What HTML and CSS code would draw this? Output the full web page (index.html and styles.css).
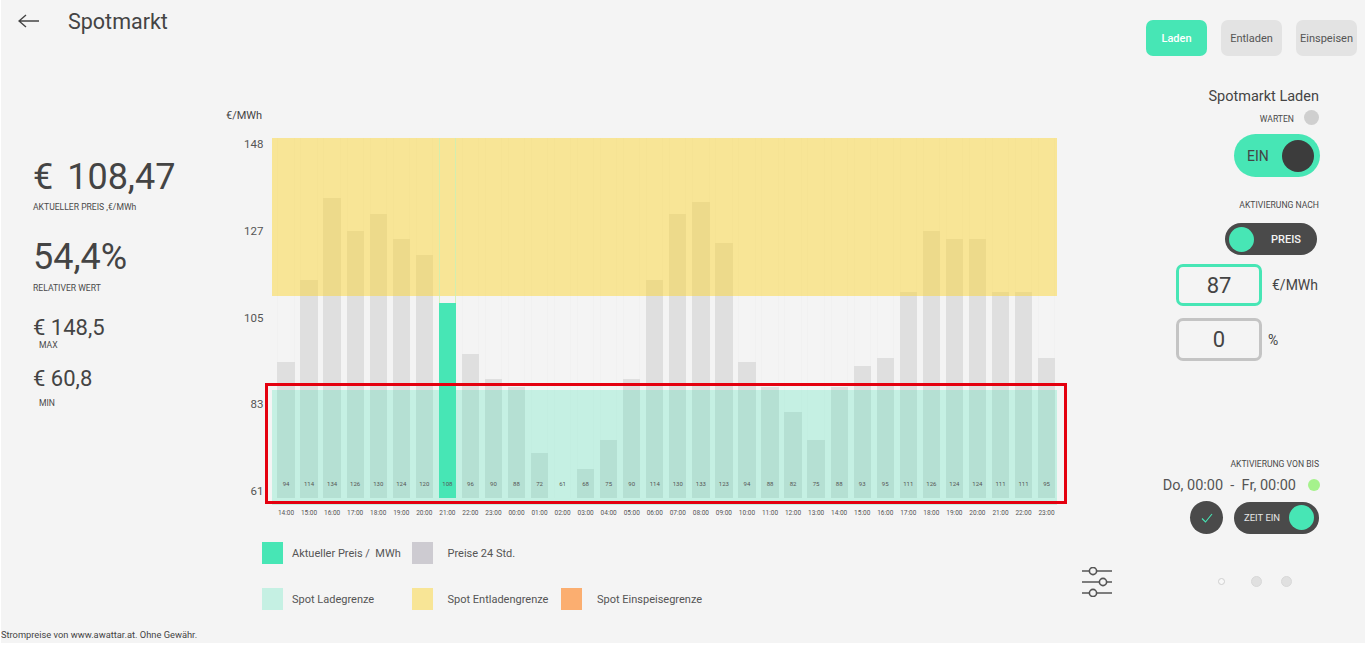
FILE: index.html
```html
<!DOCTYPE html>
<html>
<head>
    <title>Spotmarkt</title>
    <link rel="stylesheet" href="styles.css">
</head>
<body>
<div class="app">
    <header class="top">
        <div class="title-group">
            <svg class="back" width="22" height="14" viewBox="0 0 22 14"><path d="M21 7H1M8 1 1 7l7 6" fill="none" stroke="#444" stroke-width="1.4"/></svg>
            <h1>Spotmarkt</h1>
        </div>
        <div class="tabs">
            <button class="tab active">Laden</button>
            <button class="tab">Entladen</button>
            <button class="tab">Einspeisen</button>
        </div>
    </header>

    <div class="main">
        <aside class="stats">
            <div class="big first">€ 108,47</div>
            <div class="cap cap-a">AKTUELLER PREIS ,€/MWh</div>
            <div class="big second">54,4%</div>
            <div class="cap cap-b">RELATIVER WERT</div>
            <div class="med med-a">€ 148,5</div>
            <div class="cap indent">MAX</div>
            <div class="med med-b">€ 60,8</div>
            <div class="cap indent min">MIN</div>
        </aside>

        <section class="chart">
            <div class="unit">€/MWh</div>
            <div class="plot-row">
                <div class="y-axis">
                    <span>148</span><span>127</span><span>105</span><span>83</span><span>61</span>
                </div>
                <div class="plot">
                    <div class="band band-yellow"></div>
                    <div class="band band-green"></div>
                    <div class="bars">
                        <div class="col"><div class="bar" style="height:136px"></div><span class="val">94</span></div>
                        <div class="col"><div class="bar" style="height:218px"></div><span class="val">114</span></div>
                        <div class="col"><div class="bar" style="height:300px"></div><span class="val">134</span></div>
                        <div class="col"><div class="bar" style="height:267px"></div><span class="val">126</span></div>
                        <div class="col"><div class="bar" style="height:284px"></div><span class="val">130</span></div>
                        <div class="col"><div class="bar" style="height:259px"></div><span class="val">124</span></div>
                        <div class="col"><div class="bar" style="height:243px"></div><span class="val">120</span></div>
                        <div class="col now"><div class="bar" style="height:195px"></div><span class="val">108</span></div>
                        <div class="col"><div class="bar" style="height:144px"></div><span class="val">96</span></div>
                        <div class="col"><div class="bar" style="height:119px"></div><span class="val">90</span></div>
                        <div class="col"><div class="bar" style="height:111px"></div><span class="val">88</span></div>
                        <div class="col"><div class="bar" style="height:45px"></div><span class="val">72</span></div>
                        <div class="col"><div class="bar" style="height:0"></div><span class="val">61</span></div>
                        <div class="col"><div class="bar" style="height:29px"></div><span class="val">68</span></div>
                        <div class="col"><div class="bar" style="height:58px"></div><span class="val">75</span></div>
                        <div class="col"><div class="bar" style="height:119px"></div><span class="val">90</span></div>
                        <div class="col"><div class="bar" style="height:218px"></div><span class="val">114</span></div>
                        <div class="col"><div class="bar" style="height:284px"></div><span class="val">130</span></div>
                        <div class="col"><div class="bar" style="height:296px"></div><span class="val">133</span></div>
                        <div class="col"><div class="bar" style="height:255px"></div><span class="val">123</span></div>
                        <div class="col"><div class="bar" style="height:136px"></div><span class="val">94</span></div>
                        <div class="col"><div class="bar" style="height:111px"></div><span class="val">88</span></div>
                        <div class="col"><div class="bar" style="height:86px"></div><span class="val">82</span></div>
                        <div class="col"><div class="bar" style="height:58px"></div><span class="val">75</span></div>
                        <div class="col"><div class="bar" style="height:111px"></div><span class="val">88</span></div>
                        <div class="col"><div class="bar" style="height:132px"></div><span class="val">93</span></div>
                        <div class="col"><div class="bar" style="height:140px"></div><span class="val">95</span></div>
                        <div class="col"><div class="bar" style="height:206px"></div><span class="val">111</span></div>
                        <div class="col"><div class="bar" style="height:267px"></div><span class="val">126</span></div>
                        <div class="col"><div class="bar" style="height:259px"></div><span class="val">124</span></div>
                        <div class="col"><div class="bar" style="height:259px"></div><span class="val">124</span></div>
                        <div class="col"><div class="bar" style="height:206px"></div><span class="val">111</span></div>
                        <div class="col"><div class="bar" style="height:206px"></div><span class="val">111</span></div>
                        <div class="col"><div class="bar" style="height:140px"></div><span class="val">95</span></div>
                    </div>
                </div>
            </div>
            <div class="x-axis">
                <span>14:00</span><span>15:00</span><span>16:00</span><span>17:00</span><span>18:00</span><span>19:00</span><span>20:00</span><span>21:00</span><span>22:00</span><span>23:00</span><span>00:00</span><span>01:00</span><span>02:00</span><span>03:00</span><span>04:00</span><span>05:00</span><span>06:00</span><span>07:00</span><span>08:00</span><span>09:00</span><span>10:00</span><span>11:00</span><span>12:00</span><span>13:00</span><span>14:00</span><span>15:00</span><span>16:00</span><span>17:00</span><span>18:00</span><span>19:00</span><span>20:00</span><span>21:00</span><span>22:00</span><span>23:00</span>
            </div>
            <div class="chart-foot">
                <div class="legend">
                    <div class="item"><i class="swatch s-now"></i>Aktueller Preis / &nbsp;MWh</div>
                    <div class="item wide"><i class="swatch s-day"></i>Preise 24 Std.</div>
                    <div class="item"></div>
                    <div class="item"><i class="swatch s-load"></i>Spot Ladegrenze</div>
                    <div class="item wide"><i class="swatch s-unload"></i>Spot Entladengrenze</div>
                    <div class="item wide"><i class="swatch s-feed"></i>Spot Einspeisegrenze</div>
                </div>
                <svg class="sliders" width="32" height="30" viewBox="0 0 32 30">
                    <g fill="none" stroke="#555" stroke-width="1.6">
                        <path d="M1 4h30M1 15h30M1 26h30"/>
                        <circle cx="12" cy="4" r="3.6" fill="#f4f4f4"/>
                        <circle cx="22" cy="15" r="3.6" fill="#f4f4f4"/>
                        <circle cx="12" cy="26" r="3.6" fill="#f4f4f4"/>
                    </g>
                </svg>
            </div>
        </section>

        <aside class="controls">
            <div class="ctl-title">Spotmarkt Laden</div>
            <div class="status"><span class="status-text">WARTEN</span><i class="dot-grey"></i></div>
            <div class="toggle toggle-on"><span>EIN</span><i class="knob"></i></div>
            <div class="cap ctl-cap-a">AKTIVIERUNG NACH</div>
            <div class="toggle toggle-price"><i class="knob"></i><span>PREIS</span></div>
            <div class="field-row">
                <input class="num num-on" value="87">
                <span class="field-unit">€/MWh</span>
            </div>
            <div class="field-row second">
                <input class="num" value="0">
                <span class="field-unit pct">%</span>
            </div>
            <div class="cap ctl-cap-b">AKTIVIERUNG VON BIS</div>
            <div class="range"><span>Do, 00:00 &nbsp;-&nbsp; Fr, 00:00</span><i class="dot-green"></i></div>
            <div class="time-row">
                <div class="check">
                    <svg width="12" height="10" viewBox="0 0 12 10"><path d="M1 5.5 4.5 9 11 1" fill="none" stroke="#47e6b5" stroke-width="1.1"/></svg>
                </div>
                <div class="toggle toggle-time"><span>ZEIT EIN</span><i class="knob"></i></div>
            </div>
            <div class="pager">
                <i class="page current"></i>
                <i class="page"></i>
                <i class="page"></i>
            </div>
        </aside>
    </div>

    <footer class="foot">Strompreise von www.awattar.at. Ohne Gewähr.</footer>
    <div class="highlight"></div>
</div>
</body>
</html>
```

FILE: styles.css
```css
* {
    box-sizing: border-box;
}
body {
    margin: 0;
    background: #fff;
    font-family: Roboto, sans-serif;
    color: #444;
}
.app {
    position: relative;
    width: 1364px;
    height: 643px;
    margin-left: 1px;
    background: #f4f4f4;
    overflow: hidden;
}

/* header */
.top {
    display: flex;
    justify-content: space-between;
    height: 80px;
}
.title-group {
    display: flex;
    align-items: center;
    height: 42px;
    padding-left: 17px;
}
.back {
    margin-right: 28px;
}
h1 {
    margin: 0;
    font-size: 21.5px;
    font-weight: 400;
}
.tabs {
    display: flex;
    gap: 14px;
    padding: 20px 8px 0 0;
}
.tab {
    width: 61px;
    height: 36px;
    padding: 0;
    border: none;
    border-radius: 7px;
    background: #e3e3e3;
    color: #555;
    font-family: inherit;
    font-size: 11px;
}
.tab.active {
    background: #47e6b5;
    color: #fff;
    font-weight: 500;
}

.main {
    display: flex;
    height: 547px;
}

/* left stats */
.stats {
    width: 225px;
    padding: 75px 0 0 32px;
}
.big {
    height: 44px;
    font-size: 36px;
    line-height: 44px;
}
.first {
    word-spacing: 5px;
}
.second {
    margin-top: 22px;
}
.med {
    height: 22px;
    font-size: 22px;
    line-height: 22px;
}
.med-a {
    margin-top: 23px;
}
.med-b {
    margin-top: 17px;
}
.cap {
    height: 12px;
    font-size: 8.6px;
    line-height: 12px;
    color: #4a4a4a;
}
.cap-a {
    margin-top: 2px;
}
.cap-b {
    margin-top: 3px;
}
.indent {
    padding-left: 6px;
}
.min {
    margin-top: 7px;
}

/* chart */
.chart {
    width: 887px;
    padding-top: 30px;
}
.unit {
    height: 12px;
    margin-bottom: 16px;
    font-size: 11px;
    line-height: 12px;
}
.plot-row {
    display: flex;
    align-items: flex-start;
}
.y-axis {
    display: flex;
    flex-direction: column;
    justify-content: space-between;
    width: 46px;
    height: 361px;
    margin-top: -1px;
    padding-right: 8.5px;
    text-align: right;
    font-size: 11.5px;
    line-height: 14px;
    color: #555;
}
.plot {
    position: relative;
    width: 785px;
    height: 360px;
}
.band {
    position: absolute;
    left: 0;
    right: 0;
    z-index: 1;
}
.band-yellow {
    top: 0;
    height: 158px;
    background: rgba(252, 214, 56, 0.5);
}
.band-green {
    top: 252px;
    height: 115px;
    background: rgba(71, 230, 181, 0.27);
}
.bars {
    display: grid;
    grid-template-columns: repeat(34, 23.06px);
    height: 360px;
    padding-left: 2.5px;
}
.col {
    position: relative;
    display: flex;
    flex-direction: column;
    justify-content: flex-end;
    margin: 0 2.9px;
    border-left: 1px solid rgba(0, 0, 0, 0.012);
    border-right: 1px solid rgba(0, 0, 0, 0.012);
}
.bar {
    margin: 0 -1px;
    background: #dfdfdf;
}
.now {
    z-index: 2;
    border-color: rgba(205, 240, 180, 0.85);
}
.now .bar {
    background: #47e6b5;
}
.val {
    position: absolute;
    left: -3px;
    right: -3px;
    bottom: 10px;
    z-index: 3;
    text-align: center;
    font-size: 6px;
    line-height: 8px;
    color: #555;
}
.x-axis {
    display: grid;
    grid-template-columns: repeat(34, 23.06px);
    margin: 11px 0 25px 48.5px;
    font-size: 6.5px;
    line-height: 8px;
    text-align: center;
    color: #555;
}
.chart-foot {
    display: flex;
    justify-content: space-between;
    align-items: flex-start;
    padding-left: 36px;
}
.legend {
    display: grid;
    grid-template-columns: repeat(3, 149.5px);
    grid-auto-rows: 22px;
    row-gap: 24px;
}
.item {
    display: flex;
    align-items: center;
    gap: 9px;
    font-size: 11px;
    color: #555;
    white-space: nowrap;
}
.item.wide {
    gap: 15px;
}
.swatch {
    flex: none;
    width: 21px;
    height: 22px;
}
.s-now {
    background: #47e6b5;
}
.s-day {
    background: #cdcbd1;
}
.s-load {
    background: #c5f0e3;
}
.s-unload {
    background: #f8e596;
}
.s-feed {
    background: #fbae70;
}
.sliders {
    margin-top: 25px;
}

/* right controls */
.controls {
    display: flex;
    flex-direction: column;
    align-items: flex-end;
    flex: 1;
    padding: 8px 46px 0 0;
}
.ctl-title {
    font-size: 14.5px;
    line-height: 18px;
}
.status {
    display: flex;
    align-items: center;
    gap: 10px;
    margin-top: 4px;
    font-size: 8.6px;
    color: #4a4a4a;
}
.status-text {
    padding-top: 2px;
}
.dot-grey {
    width: 15px;
    height: 15px;
    border-radius: 50%;
    background: #cfcfcf;
}
.toggle {
    display: flex;
    align-items: center;
    justify-content: space-between;
    border-radius: 22px;
}
.knob {
    border-radius: 50%;
}
.toggle-on {
    width: 86px;
    height: 43px;
    margin: 9px -1px 0 0;
    padding: 0 6px 0 13px;
    background: #47e6b5;
    font-size: 14px;
}
.toggle-on .knob {
    width: 32px;
    height: 32px;
    background: #3c3c3c;
}
.ctl-cap-a {
    margin-top: 22px;
}
.toggle-price {
    width: 92px;
    height: 32px;
    margin: 12px 2px 0 0;
    padding: 0 16px 0 4px;
    background: #4a4a4a;
    color: #f4f4f4;
    font-size: 11px;
    font-weight: 500;
}
.toggle-price .knob,
.toggle-time .knob {
    width: 25px;
    height: 25px;
    background: #47e6b5;
}
.field-row {
    display: flex;
    align-items: center;
    gap: 10px;
    width: 143px;
    margin-top: 9px;
}
.field-row.second {
    gap: 6px;
    margin-top: 12px;
}
.num {
    width: 86px;
    height: 42px;
    padding: 0;
    border: 3px solid #c4c4c4;
    border-radius: 7px;
    background: #f4f4f4;
    color: #444;
    font-family: inherit;
    font-size: 22px;
    text-align: center;
}
.num-on {
    border-color: #47e6b5;
}
.second .num {
    height: 43px;
}
.field-unit {
    font-size: 14px;
}
.ctl-cap-b {
    margin-top: 97px;
}
.range {
    display: flex;
    align-items: center;
    gap: 12px;
    height: 18px;
    margin: 6px -1px 0 0;
    font-size: 14.5px;
    color: #555;
    white-space: nowrap;
}
.dot-green {
    width: 12px;
    height: 12px;
    border-radius: 50%;
    background: #a5f28c;
}
.time-row {
    display: flex;
    align-items: center;
    gap: 11px;
    margin-top: 7px;
}
.check {
    display: flex;
    align-items: center;
    justify-content: center;
    width: 33px;
    height: 33px;
    border-radius: 50%;
    background: #4a4a4a;
}
.toggle-time {
    width: 85px;
    height: 32px;
    padding: 0 5px 0 10px;
    background: #4a4a4a;
    color: #e6e6e6;
    font-size: 9.5px;
}
.pager {
    display: flex;
    align-items: center;
    align-self: flex-start;
    margin: 42px 0 0 105px;
}
.page {
    width: 11px;
    height: 11px;
    margin-right: 19px;
    border-radius: 50%;
    background: #e0e0e0;
    border: 1px solid #d8d8d8;
}
.page.current {
    width: 7px;
    height: 7px;
    margin-right: 26px;
    background: #f8f8f8;
    border-color: #cfcfcf;
}

.foot {
    height: 16px;
    font-size: 9.3px;
    line-height: 16px;
    color: #444;
}

/* red annotation frame over the chart */
.highlight {
    position: absolute;
    left: 264px;
    top: 383px;
    width: 802px;
    height: 121px;
    border: 3px solid #e4000f;
    z-index: 5;
}
```
